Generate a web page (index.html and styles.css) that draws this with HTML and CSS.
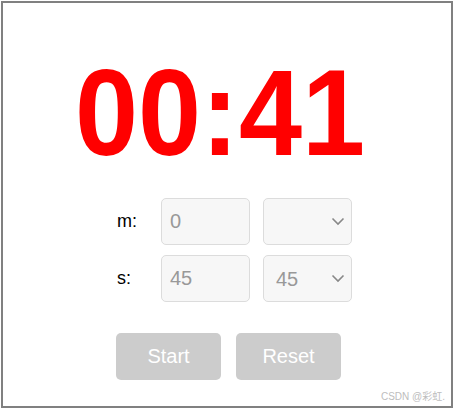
FILE: index.html
```html
<!DOCTYPE html>
<html lang="zh">
<head>
    <meta charset="UTF-8">
    <meta name="viewport" content="width=device-width, initial-scale=1.0">
    <title>倒计时</title>
    <link rel="stylesheet" href="styles.css">
</head>
<body>
    <div class="frame">
        <div class="time" id="time">00:41</div>

        <div class="form">
            <label for="minInput">m:</label>
            <input type="text" id="minInput" placeholder="0">
            <select id="minSelect">
                <option value=""></option>
            </select>

            <label for="secInput">s:</label>
            <input type="text" id="secInput" placeholder="45">
            <select id="secSelect">
                <option value="45">45</option>
            </select>
        </div>

        <div class="buttons">
            <button id="startBtn">Start</button>
            <button id="resetBtn">Reset</button>
        </div>

        <div class="watermark">CSDN @彩虹.</div>
    </div>
</body>
</html>
```

FILE: styles.css
```css
body {
    margin: 0;
    padding: 1px;
    font-family: "Liberation Sans", Arial, "Noto Sans CJK SC", sans-serif;
    background: white;
}
.frame {
    position: relative;
    box-sizing: border-box;
    width: 452px;
    height: 407px;
    border: 2px solid #808080;
    display: flex;
    flex-direction: column;
    align-items: center;
}
.time {
    margin-top: 49px;
    margin-right: 14px;
    font-size: 122px;
    font-weight: bold;
    line-height: 1;
    color: #ff0000;
    transform: scaleX(0.93);
}
.form {
    margin-top: 24px;
    margin-left: 15px;
    display: grid;
    grid-template-columns: 31px 89px 89px;
    grid-auto-rows: 47px;
    column-gap: 13px;
    row-gap: 10px;
    align-items: center;
}
.form label {
    font-size: 18px;
    color: #000;
}
.form input, .form select {
    box-sizing: border-box;
    height: 47px;
    width: 89px;
    margin: 0;
    border: 1px solid #dcdcdc;
    border-radius: 5px;
    background: #f7f7f7;
    font-family: inherit;
    font-size: 20px;
    color: #999;
}
.form input {
    padding: 0 8px;
}
.form input::placeholder {
    color: #999;
}
.form select {
    appearance: none;
    padding: 0 12px;
    background-image: url("data:image/svg+xml,%3Csvg xmlns='http://www.w3.org/2000/svg' width='14' height='9' viewBox='0 0 14 9'%3E%3Cpath d='M1.5 1.5 L7 7 L12.5 1.5' fill='none' stroke='%23888' stroke-width='1.6'/%3E%3C/svg%3E");
    background-repeat: no-repeat;
    background-position: right 6px center;
}
.buttons {
    margin-top: 31px;
    margin-left: 3px;
    display: flex;
    gap: 15px;
}
.buttons button {
    width: 105px;
    height: 47px;
    border: none;
    border-radius: 5px;
    background: #cccccc;
    color: white;
    font-family: inherit;
    font-size: 20px;
}
.watermark {
    position: absolute;
    right: 6px;
    bottom: 3px;
    font-size: 10px;
    color: #bdbdbd;
}
```
